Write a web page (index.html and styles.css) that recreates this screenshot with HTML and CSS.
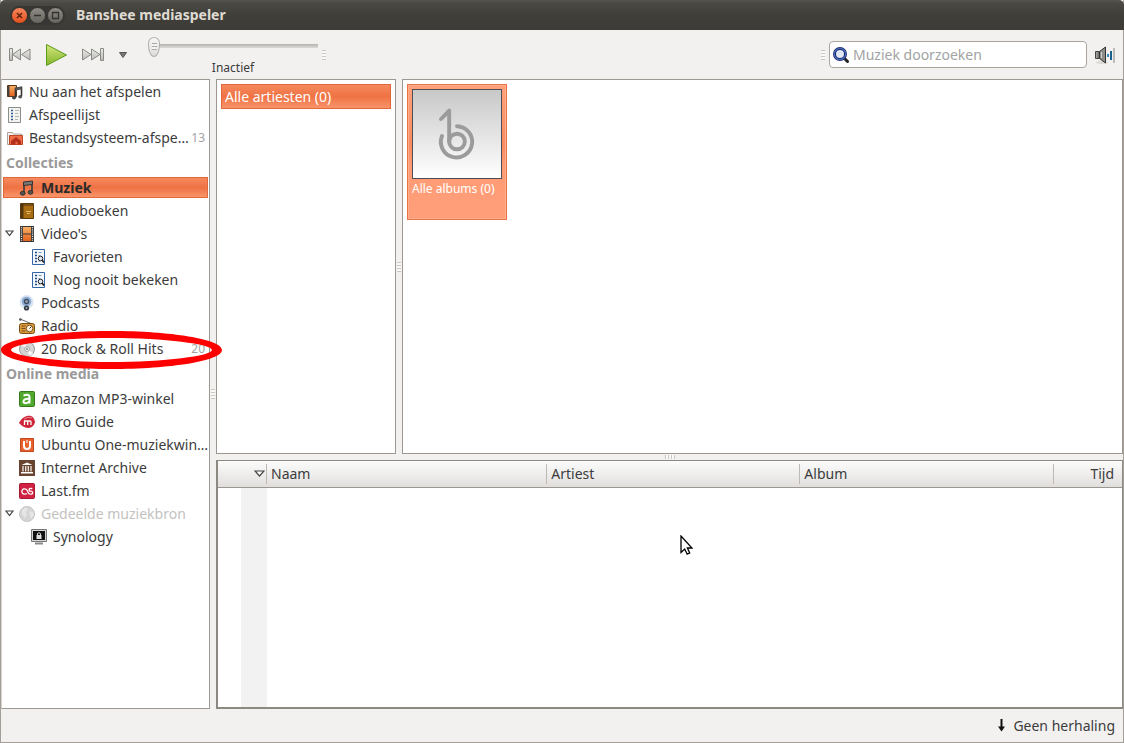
FILE: index.html
```html
<!DOCTYPE html>
<html lang="nl">
<head>
<meta charset="utf-8">
<title>Banshee mediaspeler</title>
<link rel="stylesheet" href="styles.css">
</head>
<body>
<svg class="defs" aria-hidden="true">
  <defs>
    <linearGradient id="silver" x1="0" y1="0" x2="0" y2="1"><stop offset="0" stop-color="#ececea"/><stop offset="1" stop-color="#b9b9b6"/></linearGradient>
    <linearGradient id="green" x1="0" y1="0" x2="0" y2="1"><stop offset="0" stop-color="#d3e67e"/><stop offset="1" stop-color="#85b52a"/></linearGradient>
    <linearGradient id="film" x1="0" y1="0" x2="0" y2="1"><stop offset="0" stop-color="#f7b267"/><stop offset="1" stop-color="#e4601c"/></linearGradient>
    <linearGradient id="metal" x1="0" y1="0" x2="1" y2="0"><stop offset="0" stop-color="#b5b5b2"/><stop offset="1" stop-color="#5c5c5a"/></linearGradient>
    <symbol id="note" viewBox="0 0 16 16"><path d="M5 13V2.500M13 12V1.500" fill="none" stroke="#3b3b3b" stroke-width="1.600"/><path d="M4.500 2l9-1v3.500l-9 1z" fill="#777" stroke="#333"/><ellipse cx="3.700" cy="13.300" rx="2.400" ry="1.900" fill="#555" stroke="#333"/><ellipse cx="11.500" cy="12.300" rx="2.400" ry="1.900" fill="#555" stroke="#333"/></symbol>
    <symbol id="smart" viewBox="0 0 16 16"><path d="M1.500.500h12v15h-12z" fill="#f4f8fc" stroke="#3465a4"/><path d="M4 3.500h2M4 6.500h2M4 9.500h2M4 12.500h2" stroke="#204a87" stroke-width="1.500"/><path d="M7.500 3.500h3M7.500 6.500h2M7.500 12.500h1" stroke="#7895bb"/><circle cx="9.500" cy="9.500" r="2.300" fill="#dfe9f5" stroke="#222"/><path d="M11 11l2 2.500" stroke="#222" stroke-width="1.800"/></symbol>
  </defs>
</svg>
<div class="window">
  <header class="titlebar">
    <div class="window-buttons">
      <button class="wbtn close" aria-label="Sluiten"><svg viewBox="0 0 15 15"><path d="M5 5l5 5M10 5l-5 5" stroke="#5a2412" stroke-width="1.500"/></svg></button>
      <button class="wbtn" aria-label="Minimaliseren"><svg viewBox="0 0 15 15"><path d="M4 7.500h7" stroke="#33322e" stroke-width="1.500"/></svg></button>
      <button class="wbtn" aria-label="Maximaliseren"><svg viewBox="0 0 15 15"><path d="M4.500 4.500h6v6h-6z" fill="none" stroke="#33322e" stroke-width="1.300"/></svg></button>
    </div>
    <h1 class="title">Banshee mediaspeler</h1>
  </header>

  <div class="toolbar">
    <div class="transport">
      <button class="tool" aria-label="Vorige"><svg width="23" height="15" viewBox="0 0 23 15"><g fill="url(#silver)" stroke="#8a8a86"><path d="M12.500 2v11L4.500 7.500z"/><path d="M22 2v11l-8.500-5.500z"/><path d="M1.500 1.500h3v12h-3z"/></g></svg></button>
      <button class="tool" aria-label="Afspelen"><svg width="23" height="24" viewBox="0 0 23 24"><path d="M1.500 1.500v21L21.500 12z" fill="url(#green)" stroke="#5a9a1c"/></svg></button>
      <button class="tool" aria-label="Volgende"><svg width="23" height="15" viewBox="0 0 23 15"><g fill="url(#silver)" stroke="#8a8a86"><path d="M.500 2v11l8.500-5.500z"/><path d="M9.500 2v11l8.500-5.500z"/><path d="M18.500 1.500h3v12h-3z"/></g></svg></button>
      <button class="tool" aria-label="Meer"><svg width="8" height="6" viewBox="0 0 8 6"><path d="M.500.500h7L4 5.500z" fill="#777" stroke="#555"/></svg></button>
    </div>
    <div class="seek">
      <input class="seek-slider" id="seek" type="range" min="0" max="100" value="0">
      <label class="seek-label" for="seek">Inactief</label>
    </div>
    <span class="grip"></span>
    <span class="spacer"></span>
    <span class="grip"></span>
    <label class="search">
      <svg width="16" height="16" viewBox="0 0 16 16"><path d="M11 11l3.500 3.500" stroke="#222" stroke-width="3" stroke-linecap="round"/><circle cx="7" cy="7" r="5.500" fill="#dfe5f5" stroke="#1c2c6b" stroke-width="3"/><circle cx="7" cy="7" r="5.700" fill="none" stroke="#4767bb" stroke-width="1.200"/></svg>
      <input class="search-input" type="text" placeholder="Muziek doorzoeken" aria-label="Muziek doorzoeken">
    </label>
    <button class="tool volume" aria-label="Volume"><svg width="20" height="18" viewBox="0 0 20 18"><ellipse cx="7" cy="16.500" rx="6" ry="1.500" fill="#dcdad7"/><path d="M.500 5.500h4v7h-4z" fill="url(#metal)" stroke="#444"/><path d="M4.500 5.500l6-4.500v16l-6-4.500z" fill="#8c8c89" stroke="#333"/><path d="M6.500 6v6" stroke="#d0d0cd"/><path d="M13 8v3" stroke="#3c8ac0" stroke-width="2"/><path d="M16 5v9" stroke="#19608f" stroke-width="2"/><path d="M19 2v15" stroke="#bbb" stroke-width="2"/></svg></button>
  </div>

  <main class="content">
    <nav class="sidebar" aria-label="Bronnen">
      <ul class="sources">
        <li class="source"><button class="row"><svg class="icon" viewBox="0 0 16 16"><path d="M.500 1.500h9v11h-9z" fill="url(#film)" stroke="#5b3315"/><path d="M1.500 2v10" stroke="#444" stroke-width="2"/><path d="M8.500 14V4.500l6-1V12" fill="none" stroke="#333" stroke-width="1.600"/><path d="M8.500 3.500l6-1v3l-6 1z" fill="#555"/><ellipse cx="7" cy="13.700" rx="2" ry="1.700" fill="#444"/><ellipse cx="13.200" cy="12.700" rx="2" ry="1.700" fill="#555"/></svg><span class="name">Nu aan het afspelen</span></button></li>
        <li class="source"><button class="row"><svg class="icon" viewBox="0 0 16 16"><path d="M1.500.500h12v15h-12z" fill="#f3f4f2" stroke="#8b8d89"/><path d="M4 3.500h2M4 6.500h2M4 9.500h2M4 12.500h2" stroke="#2e5a91" stroke-width="1.500"/><path d="M8 3.500h4M8 6.500h3M8 9.500h4M8 12.500h3" stroke="#b4b6b2"/></svg><span class="name">Afspeellijst</span></button></li>
        <li class="source"><button class="row"><svg class="icon" viewBox="0 0 16 16"><path d="M.500 14.500v-12h5l1 1.500h8v10.500z" fill="#f2efeb" stroke="#aaa49c"/><path d="M2.500 5.500h13v9h-13z" fill="#ee7048" stroke="#c14426"/><path d="M4 11l5-4 5 4v3.500h-3.500V12h-2v2.500H4z" fill="#b5301a"/></svg><span class="name">Bestandsysteem-afspe…</span><span class="count">13</span></button></li>
        <li class="heading">Collecties</li>
        <li class="source"><button class="row level1 selected" aria-current="true"><svg class="icon"><use href="#note"/></svg><span class="name">Muziek</span></button></li>
        <li class="source"><button class="row level1"><svg class="icon" viewBox="0 0 16 16"><path d="M1.500.500h13v15h-13z" fill="#a96d14" stroke="#5a3b0c"/><path d="M3 1v14" stroke="#55380f" stroke-width="3"/><path d="M2 2h12" stroke="#4a3315"/><path d="M7 8.500h5M8 10.500h3" stroke="#e2b764"/></svg><span class="name">Audioboeken</span></button></li>
        <li class="source"><button class="row level1"><svg class="expander" viewBox="0 0 9 7"><path d="M1 1h7L4.500 5.500z"/></svg><svg class="icon" viewBox="0 0 16 16"><path d="M1 0h14v16H1z" fill="#393633"/><path d="M4 1h8v6.500H4zM4 8.500h8V15H4z" fill="url(#film)"/><path d="M2.500 1v14M13.500 1v14" stroke="#ddd" stroke-width="1.300" stroke-dasharray="1.200 1"/></svg><span class="name">Video's</span></button></li>
        <li class="source"><button class="row level2"><svg class="icon"><use href="#smart"/></svg><span class="name">Favorieten</span></button></li>
        <li class="source"><button class="row level2"><svg class="icon"><use href="#smart"/></svg><span class="name">Nog nooit bekeken</span></button></li>
        <li class="source"><button class="row level1"><svg class="icon" viewBox="0 0 16 16"><circle cx="7.500" cy="7" r="7" fill="#dbe5f3"/><circle cx="7.500" cy="6.500" r="4.800" fill="#8ba9d0"/><circle cx="7.500" cy="6.500" r="2.700" fill="#3c4c62"/><circle cx="7.500" cy="6.500" r="1.200" fill="#aab"/><circle cx="7.500" cy="13" r="2.600" fill="#343a42"/><circle cx="7.500" cy="13" r="1" fill="#aab"/></svg><span class="name">Podcasts</span></button></li>
        <li class="source"><button class="row level1"><svg class="icon" viewBox="0 0 16 16"><path d="M1 1l11 4.500" stroke="#666"/><circle cx="1.300" cy="1.500" r="1.300" fill="#555"/><rect x=".5" y="5.500" width="15" height="10" rx="2" fill="#d79a3d" stroke="#7b4d14"/><path d="M2.500 8h4M2.500 10.500h4M2.500 13h4" stroke="#7b4d14"/><circle cx="10.500" cy="10.500" r="3.300" fill="#f9efdb" stroke="#805821"/><path d="M10.500 10.500l2-2" stroke="#333"/></svg><span class="name">Radio</span></button></li>
        <li class="source marked"><button class="row level1"><svg class="icon" viewBox="0 0 16 16"><circle cx="8" cy="8" r="7.500" fill="#d5d5d5" stroke="#999"/><path d="M8 8L2 4a7 7 0 0 1 4-3zM8 8l6 4a7 7 0 0 1-4 3z" fill="#f6f6f6"/><circle cx="8" cy="8" r="2.500" fill="#eee" stroke="#aaa"/><circle cx="8" cy="8" r="1" fill="#888"/></svg><span class="name">20 Rock &amp; Roll Hits</span><span class="count">20</span></button>
          <svg class="marker" viewBox="0 0 222 40" aria-hidden="true"><path d="M111 1C170 1 222 9 222 20S170 39 111 39 1 31 1 20 52 1 111 1zM111 8C58 8 11 14 11 20S58 32 111 32 212 26 212 20 164 8 111 8z" fill="#fe0000" fill-rule="evenodd"/></svg></li>
        <li class="heading">Online media</li>
        <li class="source"><button class="row level1"><svg class="icon" viewBox="0 0 16 16"><rect x=".5" y=".5" width="15" height="15" rx="1" fill="#4fa72c" stroke="#347a1b"/><path d="M4.500 4.500q6-2 6 1.500v6.500M10.500 8c-4-.5-6 .5-6 2.500s4 2.500 6-.5" fill="none" stroke="#fff" stroke-width="2"/></svg><span class="name">Amazon MP3-winkel</span></button></li>
        <li class="source"><button class="row level1"><svg class="icon" viewBox="0 0 16 16"><path d="M0 9C3 3 8 1 12 2q3 1 4 6-1 5-6 6Q4 14 0 9z" fill="#cd2438"/><path d="M5 5q4-3 8-1" stroke="#ef8a92" fill="none"/><path d="M5.500 11V7h5.500q1 0 1 1v3M8.700 7v4" fill="none" stroke="#fff" stroke-width="1.300"/></svg><span class="name">Miro Guide</span></button></li>
        <li class="source"><button class="row level1"><svg class="icon" viewBox="0 0 16 16"><path d="M1.500 1.500h13v13h-13z" fill="#e8612e" stroke="#c2471d"/><path d="M5 4v5q0 3 3 3t3-3V4" fill="none" stroke="#fff" stroke-width="2"/><path d="M8 3v3" stroke="#fff"/></svg><span class="name">Ubuntu One-muziekwin…</span></button></li>
        <li class="source"><button class="row level1"><svg class="icon" viewBox="0 0 16 16"><path d="M0 0h16v16H0z" fill="#694531"/><path d="M2.500 5L8 2.500 13.500 5zM2 12h12v1.500H2z" fill="#fff"/><path d="M4 6v5.500M6.700 6v5.500M9.300 6v5.500M12 6v5.500" stroke="#f3ece7" stroke-width="1.300"/></svg><span class="name">Internet Archive</span></button></li>
        <li class="source"><button class="row level1"><svg class="icon" viewBox="0 0 16 16"><rect x=".5" y=".5" width="15" height="15" rx="1" fill="#d02343" stroke="#a91730"/><path d="M8 10.500q-1 .7-2.500.7a2.700 2.700 0 1 1 1.500-5q1 .5 2 3 .8 2 2.500 2 2.200 0 2.200-1.500t-2-1.600-1.500-1.400q0-1.500 2-1.300l1 .5" fill="none" stroke="#fff" stroke-width="1.300"/></svg><span class="name">Last.fm</span></button></li>
        <li class="source"><button class="row level1 muted"><svg class="expander" viewBox="0 0 9 7"><path d="M1 1h7L4.500 5.500z"/></svg><svg class="icon" viewBox="0 0 16 16"><circle cx="8" cy="8" r="7.500" fill="#d5d5d5" stroke="#c5c5c5"/><path d="M3 4l4-2.500 2 2L6.500 6 8 8l-2 4-3-4zM10 5l4 1 1 3-3 4-1-4z" fill="#e6e6e6"/></svg><span class="name">Gedeelde muziekbron</span></button></li>
        <li class="source"><button class="row level2"><svg class="icon" viewBox="0 0 16 16"><path d="M.500.500h15v12H.500z" fill="#d5d5d2" stroke="#777"/><path d="M2 2h12v9H2z" fill="#111"/><path d="M6.500 6V4.500q1.500-1.500 3 0V6" fill="none" stroke="#ddd"/><path d="M5.500 6h5v4h-5z" fill="#ddd"/><path d="M4 14.500h8" stroke="#888" stroke-width="2"/></svg><span class="name">Synology</span></button></li>
      </ul>
    </nav>
    <div class="splitter vertical"><span class="grip"></span></div>
    <div class="browser">
      <div class="filters">
        <section class="artists" aria-label="Artiesten"><button class="artist">Alle artiesten (0)</button></section>
        <div class="splitter vertical"><span class="grip"></span></div>
        <section class="albums" aria-label="Albums">
          <button class="album">
            <svg class="cover" viewBox="66 42 270 270"><g fill="none" stroke="#9b9b9b" stroke-width="12" stroke-linecap="round" stroke-linejoin="round"><path d="M152 131l25-26v96"/><circle cx="201" cy="200" r="24"/><path d="M201 153a48 48 0 1 1-46 30"/></g></svg>
            <span class="album-name">Alle albums (0)</span>
          </button>
        </section>
      </div>
      <div class="splitter horizontal"><span class="grip flat"></span></div>
      <section class="tracks" aria-label="Nummers">
        <table class="track-table">
          <thead><tr>
            <th class="col-status" aria-label="Status" aria-sort="descending"><svg class="expander" viewBox="0 0 11 7"><path d="M1 1h9L5.500 6z"/></svg></th>
            <th class="col-name">Naam</th><th class="col-artist">Artiest</th><th class="col-album">Album</th><th class="col-time">Tijd</th>
          </tr></thead>
          <tbody><tr><td class="status-cell"></td><td></td><td></td><td></td><td></td></tr></tbody>
        </table>
      </section>
    </div>
  </main>

  <footer class="statusbar">
    <button class="repeat"><svg width="7" height="13" viewBox="0 0 7 13"><path d="M3.500 0v9" stroke="#111" stroke-width="2"/><path d="M0 7.500h7l-3.500 5z" fill="#111"/></svg>Geen herhaling</button>
  </footer>
</div>
<svg class="pointer" viewBox="0 0 13 21" aria-hidden="true"><path d="M1 1v16.500l3.700-3.500 2.500 5.200 2.500-1.200-2.300-5H12z" fill="#fff" stroke="#000" stroke-width="1.300"/></svg>
</body>
</html>
```
FILE: styles.css
```css
* { box-sizing: border-box; }
body { margin: 0; background: #3c3b37; color: #3c3c3c; font: 14px/20px "Noto Sans", "Open Sans", sans-serif; }
button, input { font: inherit; color: inherit; }
button { margin: 0; padding: 0; border: 0; background: none; text-align: left; }
.defs { position: absolute; width: 0; height: 0; }

.window { display: flex; flex-direction: column; height: 100vh; background: #f2f1f0; border: 1px solid #a39e98; border-top: 0; }
.titlebar { display: flex; align-items: center; gap: 11px; flex: 0 0 30px; margin: 0 -1px; padding-left: 10px; background: linear-gradient(#55534d, #4a4843 12%, #403f3a 50%, #3c3b37); border-radius: 5px 5px 0 0; }
.window-buttons { display: flex; gap: 1px; padding: 1px; border-radius: 9px; background: #383733; }
.wbtn { width: 17px; height: 17px; border: 1px solid #35342f; border-radius: 50%; background: linear-gradient(#8d8b83, #67665f); }
.wbtn svg { display: block; width: 15px; height: 15px; }
.wbtn.close { background: linear-gradient(#f7855c, #e2511d); }
.title { margin: 0; color: #dfdbd2; font-size: 14px; font-weight: 700; line-height: 20px; }

.toolbar { display: flex; align-items: center; flex: 0 0 49px; padding: 0 8px 0 7px; }
.transport { display: flex; align-items: center; gap: 14px; padding-right: 21px; }
.tool, .tool svg { display: block; }
.seek { display: grid; justify-items: center; width: 170px; margin-right: 4px; padding-top: 4px; }
.seek-slider { width: 100%; height: 22px; margin: 0; appearance: none; background: linear-gradient(#b5b2ae, #dddbd8) 6px 8px / 100% 4px no-repeat; }
.seek-slider::-webkit-slider-thumb { appearance: none; width: 12px; height: 20px; border: 1px solid #b3b0ac; border-radius: 6px 6px 6px 6px / 6px 6px 12px 12px; background: repeating-linear-gradient(#aaa 0 1px, #f3f3f2 1px 3px) center / 5px 7px no-repeat, linear-gradient(#f6f6f5, #dddcda); }
.seek-label { font-size: 12px; line-height: 20px; }
.grip { flex: none; width: 4px; height: 10px; background: repeating-linear-gradient(#c9c7c4 0 1px, #f9f9f8 1px 3px); }
.grip.flat { width: 10px; height: 4px; background: repeating-linear-gradient(90deg, #c9c7c4 0 1px, #f9f9f8 1px 3px); }
.spacer { flex: 1; }
.search { display: flex; align-items: center; gap: 4px; width: 258px; height: 27px; margin: 0 8px 0 4px; padding: 0 3px; border: 1px solid #aaa49d; border-radius: 4px; background: #fff; }
.search svg { flex: none; }
.search-input { flex: 1; min-width: 0; padding: 0; border: 0; outline: 0; background: none; }
.search-input::placeholder { color: #a3a3a3; opacity: 1; }

.content { display: flex; flex: 1; min-height: 0; }
.sidebar { flex: 0 0 209px; min-width: 0; background: #fff; border: 1px solid #9c9891; border-left-color: #d5d2ce; }
.sources { margin: 0; padding: 0; list-style: none; }
.source { position: relative; height: 23px; padding: 1px; }
.heading { height: 27px; padding-left: 4px; color: #9a9a9a; font-weight: 700; line-height: 27px; }
.row { display: flex; align-items: center; gap: 6px; position: relative; width: 100%; height: 21px; padding: 0 0 0 4px; white-space: nowrap; }
.row.level1 { padding-left: 16px; }
.row.level2 { padding-left: 28px; }
.row.selected { padding-left: 15px; border: 1px solid #e2673a; background: linear-gradient(#f58a5e, #ef7243 50%, #f8946a); color: #2b2b2b; font-weight: 700; }
.row.muted { color: #c4c2c0; }
.icon { flex: none; width: 16px; height: 16px; }
.name { flex: 1; min-width: 0; }
.count { margin: 0 3px 0 -6px; color: #a3a3a3; font-size: 12px; }
.expander { width: 9px; height: 7px; fill: #fff; stroke: #444; stroke-width: 1.2; }
.row .expander { position: absolute; left: 2px; }
.marker { position: absolute; top: -7px; left: -2px; z-index: 2; width: 222px; height: 40px; pointer-events: none; }

.splitter { display: flex; align-items: center; justify-content: center; flex: 0 0 6px; }
.browser { display: flex; flex-direction: column; flex: 1; min-width: 0; }
.filters { display: flex; flex: 3 1 0; min-height: 0; }
.artists { flex: 0 0 180px; padding: 4px; border: 1px solid #9c9891; background: #fff; }
.artist { width: 100%; height: 25px; padding-left: 3px; border: 1px solid #e2673a; background: linear-gradient(#f58a5e, #ef7243 50%, #f8946a); color: #fff; }
.albums { flex: 1; padding: 4px; border: 1px solid #9c9891; background: #fff; }
.album { display: flex; flex-direction: column; width: 100px; height: 136px; padding: 4px; border: 1px solid #ea7446; background: linear-gradient(#ffa17b, #f98b60 45%, #ff9b75 60%, #ff9f7a); box-shadow: inset 0 0 0 1px #ffaf8e; color: #fff; font-size: 12px; }
.cover { flex: none; width: 90px; height: 90px; border: 1px solid #4e4e55; background: linear-gradient(#c8c8c8, #fff); }
.tracks { flex: 0 0 40%; min-height: 0; max-height: 249px; border: 2px solid #8c8982; border-width: 1px 1px 2px 2px; background: #fff; }
.track-table { width: 100%; height: 100%; table-layout: fixed; border-collapse: collapse; }
.track-table th { height: 26px; padding: 0 4px; border-bottom: 1px solid #9c9891; background: linear-gradient(#bdbab6, #bdbab6) right center / 1px 20px no-repeat, linear-gradient(#fcfcfc, #e1dfdd); font-weight: 400; line-height: 20px; text-align: left; }
.track-table .col-status { width: 49px; padding-right: 2px; text-align: right; }
.col-status .expander { display: block; width: 11px; margin-left: auto; }
.col-name { width: 31%; }
.col-artist { width: 28%; }
.track-table .col-time { width: 68px; padding-right: 8px; background: linear-gradient(#fcfcfc, #e1dfdd); text-align: right; }
.track-table td { padding: 0; }
.status-cell { background: linear-gradient(#f2f2f2, #f2f2f2) right / 26px 100% no-repeat; }

.statusbar { display: flex; align-items: center; justify-content: flex-end; flex: 0 0 33px; padding: 0 8px; }
.repeat { display: flex; align-items: center; gap: 8px; }
.pointer { position: absolute; top: 535px; left: 680px; width: 13px; height: 21px; pointer-events: none; }
```
